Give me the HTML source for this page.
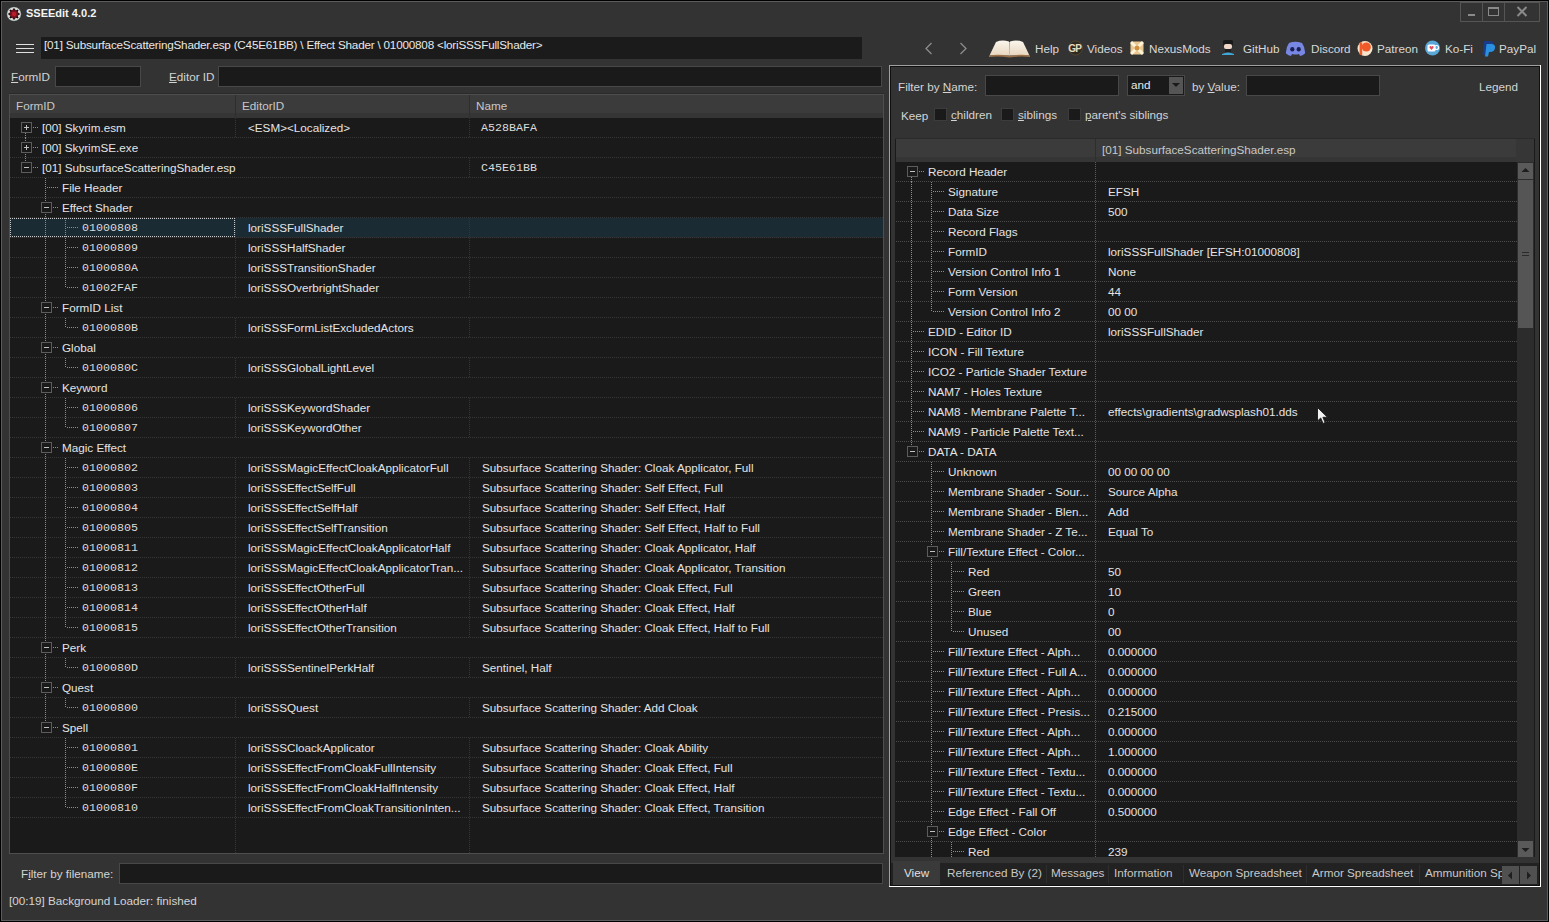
<!DOCTYPE html>
<html><head><meta charset="utf-8"><title>SSEEdit 4.0.2</title>
<style>
html,body{margin:0;padding:0;width:1549px;height:922px;overflow:hidden;background:#333}
body{position:relative;font-family:"Liberation Sans",sans-serif;font-size:11.7px;color:#e0e0e0}
div,span,svg{position:absolute}
.t{white-space:pre;height:20px}
u{text-decoration:underline;text-underline-offset:1px}
</style></head><body>
<div style="left:0px;top:0px;width:1549px;height:922px;background:#000"></div>
<div style="left:1px;top:1px;width:1547px;height:920px;background:#5c5c5c"></div>
<div style="left:2px;top:2px;width:1545px;height:918px;background:#333333"></div>
<svg style="position:absolute;left:6px;top:6px" width="16" height="16" viewBox="0 0 16 16">
<circle cx="8" cy="8" r="7.3" fill="#dcdcdc"/>
<circle cx="8" cy="8" r="7.3" fill="none" stroke="#1a2a24" stroke-width="0.6"/>
<circle cx="8" cy="8" r="4.6" fill="#7a1020"/>
<g stroke="#0a0a0a" stroke-width="1.7"><line x1="8" y1="2.4" x2="8" y2="4.2"/><line x1="8" y1="11.8" x2="8" y2="13.6"/><line x1="2.4" y1="8" x2="4.2" y2="8"/><line x1="11.8" y1="8" x2="13.6" y2="8"/>
<line x1="4" y1="4" x2="5.3" y2="5.3"/><line x1="10.7" y1="10.7" x2="12" y2="12"/><line x1="4" y1="12" x2="5.3" y2="10.7"/><line x1="10.7" y1="5.3" x2="12" y2="4"/></g>
<circle cx="8" cy="8" r="2.2" fill="#b81c2c"/>
</svg>
<span class="t" style="left:26px;top:3px;line-height:20px;font-weight:bold;font-size:11px;color:#f4f4f4">SSEEdit 4.0.2</span>
<div style="left:1460px;top:2px;width:80px;height:20px;border:1px solid #555;box-sizing:border-box"></div>
<div style="left:1482px;top:2px;width:1px;height:20px;background:#555"></div>
<div style="left:1504px;top:2px;width:1px;height:20px;background:#555"></div>
<div style="left:1468px;top:14px;width:7px;height:2px;background:#8a8a8a"></div>
<div style="left:1488px;top:7px;width:11px;height:9px;border:1px solid #8a8a8a;border-top-width:2px;box-sizing:border-box"></div>
<svg style="position:absolute;left:1516px;top:6px" width="12" height="11" viewBox="0 0 12 11"><path d="M1.5 1 L10.5 10 M10.5 1 L1.5 10" stroke="#8a8a8a" stroke-width="2"/></svg>
<div style="left:16px;top:44px;width:18px;height:1px;background:#e0e0e0"></div>
<div style="left:16px;top:48px;width:18px;height:1px;background:#e0e0e0"></div>
<div style="left:16px;top:52px;width:18px;height:1px;background:#e0e0e0"></div>
<div style="left:41px;top:37px;width:821px;height:22px;background:#1b1b1b"></div>
<span class="t" style="left:44px;top:35px;line-height:20px;color:#e8e8e8;letter-spacing:-0.2px">[01] SubsurfaceScatteringShader.esp (C45E61BB) \ Effect Shader \ 01000808 &lt;loriSSSFullShader&gt;</span>
<svg style="position:absolute;left:924px;top:42px" width="10" height="13" viewBox="0 0 10 13"><path d="M7.5 1 L2 6.5 L7.5 12" stroke="#8c8c8c" stroke-width="1.3" fill="none"/></svg>
<svg style="position:absolute;left:958px;top:42px" width="10" height="13" viewBox="0 0 10 13"><path d="M2.5 1 L8 6.5 L2.5 12" stroke="#8c8c8c" stroke-width="1.3" fill="none"/></svg>
<svg style="position:absolute;left:988px;top:39px" width="43" height="19" viewBox="0 0 43 19">
<defs><linearGradient id="pg" x1="0" y1="0" x2="0" y2="1"><stop offset="0" stop-color="#fbf6ee"/><stop offset="1" stop-color="#e8d6be"/></linearGradient></defs>
<path d="M1.5 16.5 L8 3 Q14 0.5 21 2.5 L21.5 16.5 Z" fill="url(#pg)"/>
<path d="M41.5 16.5 L35 3 Q29 0.5 22 2.5 L21.5 16.5 Z" fill="url(#pg)"/>
<path d="M1 16.5 Q11 15 21.5 17 Q32 15 42 16.5 L42 18 Q32 16.8 21.5 18.6 Q11 16.8 1 18 Z" fill="#9a7048"/>
<path d="M21.5 3 L21.5 16.5" stroke="#d8c8b0" stroke-width="0.8"/>
</svg>
<span class="t" style="left:1035px;top:39px;line-height:20px;color:#d8d8d8">Help</span>
<svg style="position:absolute;left:1067px;top:40px" width="17" height="16" viewBox="0 0 17 16"><circle cx="8.5" cy="8" r="7" fill="#2e2a22" stroke="#5a4a30" stroke-width="0.8"/><text x="1.3" y="12.3" font-family="Liberation Sans" font-size="10" font-weight="bold" fill="#e8dcc0" letter-spacing="-0.8">GP</text></svg>
<span class="t" style="left:1087px;top:39px;line-height:20px;color:#d8d8d8">Videos</span>
<svg style="position:absolute;left:1130px;top:41px" width="14" height="14" viewBox="0 0 14 14"><rect x="0.5" y="0.5" width="13" height="13" rx="3" fill="#e8c890"/><path d="M1 1 L13 13 M13 1 L1 13" stroke="#fff4d8" stroke-width="3"/><circle cx="7" cy="7" r="2.5" fill="#d09040"/></svg>
<span class="t" style="left:1149px;top:39px;line-height:20px;color:#d8d8d8">NexusMods</span>
<svg style="position:absolute;left:1221px;top:39px" width="14" height="17" viewBox="0 0 14 17"><rect x="2" y="1" width="10" height="6" rx="2" fill="#181818"/><rect x="3" y="5" width="8" height="5" rx="2" fill="#f0d8c8"/><rect x="4" y="10" width="6" height="3" fill="#202020"/><path d="M1 15 Q7 12 13 15 L13 16 L1 16Z" fill="#40a8d8"/></svg>
<span class="t" style="left:1243px;top:39px;line-height:20px;color:#d8d8d8">GitHub</span>
<svg style="position:absolute;left:1285px;top:41px" width="21" height="15" viewBox="0 0 21 15"><path d="M4 2 Q10 -0.5 17 2 Q20.5 7 20 12.5 Q17.5 14.5 15 15 L14 13 Q10.5 14 7 13 L6 15 Q3.5 14.5 1 12.5 Q0.5 7 4 2Z" fill="#7886e4"/><ellipse cx="7.3" cy="8.3" rx="2.1" ry="2.3" fill="#1a2050"/><ellipse cx="13.7" cy="8.3" rx="2.1" ry="2.3" fill="#1a2050"/></svg>
<span class="t" style="left:1311px;top:39px;line-height:20px;color:#d8d8d8">Discord</span>
<svg style="position:absolute;left:1357px;top:40px" width="16" height="17" viewBox="0 0 16 17"><circle cx="8" cy="8.5" r="7.5" fill="#f8e4cc"/><circle cx="9.3" cy="7" r="4.6" fill="#f05a28"/><rect x="2.6" y="2.4" width="2.6" height="12.5" fill="#f05a28"/></svg>
<span class="t" style="left:1377px;top:39px;line-height:20px;color:#d8d8d8">Patreon</span>
<svg style="position:absolute;left:1424px;top:40px" width="17" height="16" viewBox="0 0 17 16"><circle cx="8.5" cy="8" r="7.5" fill="#5aa8d8"/><rect x="3.5" y="4.5" width="8" height="7" rx="1.5" fill="#fff"/><circle cx="12.5" cy="7.5" r="2" fill="none" stroke="#fff" stroke-width="1.2"/><path d="M7.5 10 L5.5 7.8 Q5 6 6.5 6 Q7.3 6 7.5 7 Q7.7 6 8.5 6 Q10 6 9.5 7.8Z" fill="#e05060"/></svg>
<span class="t" style="left:1445px;top:39px;line-height:20px;color:#d8d8d8">Ko-Fi</span>
<svg style="position:absolute;left:1482px;top:40px" width="14" height="17" viewBox="0 0 14 17"><path d="M2 1 L8 1 Q12 1 11.5 5 Q11 9 6.5 9 L5 9 L4 15 L0.5 15Z" fill="#1a3a8a"/><path d="M4.5 4 L10 4 Q13.5 4.5 13 8 Q12.5 12 8 12 L7 12 L6 16.5 L3 16.5Z" fill="#2a90e0"/></svg>
<span class="t" style="left:1499px;top:39px;line-height:20px;color:#d8d8d8">PayPal</span>
<span class="t" style="left:11px;top:67px;line-height:20px;color:#d4d4d4"><u>F</u>ormID</span>
<div style="left:55px;top:66px;width:86px;height:21px;background:#1a1a1a;border:1px solid #484848;box-sizing:border-box"></div>
<span class="t" style="left:169px;top:67px;line-height:20px;color:#d4d4d4"><u>E</u>ditor ID</span>
<div style="left:218px;top:66px;width:664px;height:21px;background:#1a1a1a;border:1px solid #484848;box-sizing:border-box"></div>
<div style="left:9px;top:93px;width:875px;height:1px;background:#2a2a2a"></div>
<div style="left:9px;top:94px;width:875px;height:760px;border:1px solid #4e4e4e;box-sizing:border-box;background:#1a1a1a"></div>
<div style="left:10px;top:95px;width:873px;height:23px;background:linear-gradient(#3b3b3b 0 18px,#353535 18px)"></div>
<div style="left:235px;top:95px;width:1px;height:23px;background:#2e2e2e"></div>
<div style="left:469px;top:95px;width:1px;height:23px;background:#2e2e2e"></div>
<span class="t" style="left:16px;top:96px;line-height:20px;color:#c8c8c8">FormID</span>
<span class="t" style="left:242px;top:96px;line-height:20px;color:#c8c8c8">EditorID</span>
<span class="t" style="left:476px;top:96px;line-height:20px;color:#c8c8c8">Name</span>
<div style="left:10px;top:218px;width:873px;height:20px;background:#1b2b33"></div>
<div style="left:10px;top:137px;width:873px;height:1px;background:repeating-linear-gradient(90deg,#363636 0 1px,transparent 1px 2px)"></div>
<div style="left:10px;top:157px;width:873px;height:1px;background:repeating-linear-gradient(90deg,#363636 0 1px,transparent 1px 2px)"></div>
<div style="left:10px;top:177px;width:873px;height:1px;background:repeating-linear-gradient(90deg,#363636 0 1px,transparent 1px 2px)"></div>
<div style="left:10px;top:197px;width:873px;height:1px;background:repeating-linear-gradient(90deg,#363636 0 1px,transparent 1px 2px)"></div>
<div style="left:10px;top:217px;width:873px;height:1px;background:repeating-linear-gradient(90deg,#363636 0 1px,transparent 1px 2px)"></div>
<div style="left:10px;top:237px;width:873px;height:1px;background:repeating-linear-gradient(90deg,#363636 0 1px,transparent 1px 2px)"></div>
<div style="left:10px;top:257px;width:873px;height:1px;background:repeating-linear-gradient(90deg,#363636 0 1px,transparent 1px 2px)"></div>
<div style="left:10px;top:277px;width:873px;height:1px;background:repeating-linear-gradient(90deg,#363636 0 1px,transparent 1px 2px)"></div>
<div style="left:10px;top:297px;width:873px;height:1px;background:repeating-linear-gradient(90deg,#363636 0 1px,transparent 1px 2px)"></div>
<div style="left:10px;top:317px;width:873px;height:1px;background:repeating-linear-gradient(90deg,#363636 0 1px,transparent 1px 2px)"></div>
<div style="left:10px;top:337px;width:873px;height:1px;background:repeating-linear-gradient(90deg,#363636 0 1px,transparent 1px 2px)"></div>
<div style="left:10px;top:357px;width:873px;height:1px;background:repeating-linear-gradient(90deg,#363636 0 1px,transparent 1px 2px)"></div>
<div style="left:10px;top:377px;width:873px;height:1px;background:repeating-linear-gradient(90deg,#363636 0 1px,transparent 1px 2px)"></div>
<div style="left:10px;top:397px;width:873px;height:1px;background:repeating-linear-gradient(90deg,#363636 0 1px,transparent 1px 2px)"></div>
<div style="left:10px;top:417px;width:873px;height:1px;background:repeating-linear-gradient(90deg,#363636 0 1px,transparent 1px 2px)"></div>
<div style="left:10px;top:437px;width:873px;height:1px;background:repeating-linear-gradient(90deg,#363636 0 1px,transparent 1px 2px)"></div>
<div style="left:10px;top:457px;width:873px;height:1px;background:repeating-linear-gradient(90deg,#363636 0 1px,transparent 1px 2px)"></div>
<div style="left:10px;top:477px;width:873px;height:1px;background:repeating-linear-gradient(90deg,#363636 0 1px,transparent 1px 2px)"></div>
<div style="left:10px;top:497px;width:873px;height:1px;background:repeating-linear-gradient(90deg,#363636 0 1px,transparent 1px 2px)"></div>
<div style="left:10px;top:517px;width:873px;height:1px;background:repeating-linear-gradient(90deg,#363636 0 1px,transparent 1px 2px)"></div>
<div style="left:10px;top:537px;width:873px;height:1px;background:repeating-linear-gradient(90deg,#363636 0 1px,transparent 1px 2px)"></div>
<div style="left:10px;top:557px;width:873px;height:1px;background:repeating-linear-gradient(90deg,#363636 0 1px,transparent 1px 2px)"></div>
<div style="left:10px;top:577px;width:873px;height:1px;background:repeating-linear-gradient(90deg,#363636 0 1px,transparent 1px 2px)"></div>
<div style="left:10px;top:597px;width:873px;height:1px;background:repeating-linear-gradient(90deg,#363636 0 1px,transparent 1px 2px)"></div>
<div style="left:10px;top:617px;width:873px;height:1px;background:repeating-linear-gradient(90deg,#363636 0 1px,transparent 1px 2px)"></div>
<div style="left:10px;top:637px;width:873px;height:1px;background:repeating-linear-gradient(90deg,#363636 0 1px,transparent 1px 2px)"></div>
<div style="left:10px;top:657px;width:873px;height:1px;background:repeating-linear-gradient(90deg,#363636 0 1px,transparent 1px 2px)"></div>
<div style="left:10px;top:677px;width:873px;height:1px;background:repeating-linear-gradient(90deg,#363636 0 1px,transparent 1px 2px)"></div>
<div style="left:10px;top:697px;width:873px;height:1px;background:repeating-linear-gradient(90deg,#363636 0 1px,transparent 1px 2px)"></div>
<div style="left:10px;top:717px;width:873px;height:1px;background:repeating-linear-gradient(90deg,#363636 0 1px,transparent 1px 2px)"></div>
<div style="left:10px;top:737px;width:873px;height:1px;background:repeating-linear-gradient(90deg,#363636 0 1px,transparent 1px 2px)"></div>
<div style="left:10px;top:757px;width:873px;height:1px;background:repeating-linear-gradient(90deg,#363636 0 1px,transparent 1px 2px)"></div>
<div style="left:10px;top:777px;width:873px;height:1px;background:repeating-linear-gradient(90deg,#363636 0 1px,transparent 1px 2px)"></div>
<div style="left:10px;top:797px;width:873px;height:1px;background:repeating-linear-gradient(90deg,#363636 0 1px,transparent 1px 2px)"></div>
<div style="left:10px;top:817px;width:873px;height:1px;background:repeating-linear-gradient(90deg,#363636 0 1px,transparent 1px 2px)"></div>
<div style="left:235px;top:118px;width:1px;height:19px;background:repeating-linear-gradient(180deg,#363636 0 1px,transparent 1px 2px)"></div>
<div style="left:469px;top:118px;width:1px;height:19px;background:repeating-linear-gradient(180deg,#363636 0 1px,transparent 1px 2px)"></div>
<div style="left:469px;top:158px;width:1px;height:19px;background:repeating-linear-gradient(180deg,#363636 0 1px,transparent 1px 2px)"></div>
<div style="left:235px;top:218px;width:1px;height:19px;background:repeating-linear-gradient(180deg,#363636 0 1px,transparent 1px 2px)"></div>
<div style="left:469px;top:218px;width:1px;height:19px;background:repeating-linear-gradient(180deg,#363636 0 1px,transparent 1px 2px)"></div>
<div style="left:235px;top:238px;width:1px;height:19px;background:repeating-linear-gradient(180deg,#363636 0 1px,transparent 1px 2px)"></div>
<div style="left:469px;top:238px;width:1px;height:19px;background:repeating-linear-gradient(180deg,#363636 0 1px,transparent 1px 2px)"></div>
<div style="left:235px;top:258px;width:1px;height:19px;background:repeating-linear-gradient(180deg,#363636 0 1px,transparent 1px 2px)"></div>
<div style="left:469px;top:258px;width:1px;height:19px;background:repeating-linear-gradient(180deg,#363636 0 1px,transparent 1px 2px)"></div>
<div style="left:235px;top:278px;width:1px;height:19px;background:repeating-linear-gradient(180deg,#363636 0 1px,transparent 1px 2px)"></div>
<div style="left:469px;top:278px;width:1px;height:19px;background:repeating-linear-gradient(180deg,#363636 0 1px,transparent 1px 2px)"></div>
<div style="left:235px;top:318px;width:1px;height:19px;background:repeating-linear-gradient(180deg,#363636 0 1px,transparent 1px 2px)"></div>
<div style="left:469px;top:318px;width:1px;height:19px;background:repeating-linear-gradient(180deg,#363636 0 1px,transparent 1px 2px)"></div>
<div style="left:235px;top:358px;width:1px;height:19px;background:repeating-linear-gradient(180deg,#363636 0 1px,transparent 1px 2px)"></div>
<div style="left:469px;top:358px;width:1px;height:19px;background:repeating-linear-gradient(180deg,#363636 0 1px,transparent 1px 2px)"></div>
<div style="left:235px;top:398px;width:1px;height:19px;background:repeating-linear-gradient(180deg,#363636 0 1px,transparent 1px 2px)"></div>
<div style="left:469px;top:398px;width:1px;height:19px;background:repeating-linear-gradient(180deg,#363636 0 1px,transparent 1px 2px)"></div>
<div style="left:235px;top:418px;width:1px;height:19px;background:repeating-linear-gradient(180deg,#363636 0 1px,transparent 1px 2px)"></div>
<div style="left:469px;top:418px;width:1px;height:19px;background:repeating-linear-gradient(180deg,#363636 0 1px,transparent 1px 2px)"></div>
<div style="left:235px;top:458px;width:1px;height:19px;background:repeating-linear-gradient(180deg,#363636 0 1px,transparent 1px 2px)"></div>
<div style="left:469px;top:458px;width:1px;height:19px;background:repeating-linear-gradient(180deg,#363636 0 1px,transparent 1px 2px)"></div>
<div style="left:235px;top:478px;width:1px;height:19px;background:repeating-linear-gradient(180deg,#363636 0 1px,transparent 1px 2px)"></div>
<div style="left:469px;top:478px;width:1px;height:19px;background:repeating-linear-gradient(180deg,#363636 0 1px,transparent 1px 2px)"></div>
<div style="left:235px;top:498px;width:1px;height:19px;background:repeating-linear-gradient(180deg,#363636 0 1px,transparent 1px 2px)"></div>
<div style="left:469px;top:498px;width:1px;height:19px;background:repeating-linear-gradient(180deg,#363636 0 1px,transparent 1px 2px)"></div>
<div style="left:235px;top:518px;width:1px;height:19px;background:repeating-linear-gradient(180deg,#363636 0 1px,transparent 1px 2px)"></div>
<div style="left:469px;top:518px;width:1px;height:19px;background:repeating-linear-gradient(180deg,#363636 0 1px,transparent 1px 2px)"></div>
<div style="left:235px;top:538px;width:1px;height:19px;background:repeating-linear-gradient(180deg,#363636 0 1px,transparent 1px 2px)"></div>
<div style="left:469px;top:538px;width:1px;height:19px;background:repeating-linear-gradient(180deg,#363636 0 1px,transparent 1px 2px)"></div>
<div style="left:235px;top:558px;width:1px;height:19px;background:repeating-linear-gradient(180deg,#363636 0 1px,transparent 1px 2px)"></div>
<div style="left:469px;top:558px;width:1px;height:19px;background:repeating-linear-gradient(180deg,#363636 0 1px,transparent 1px 2px)"></div>
<div style="left:235px;top:578px;width:1px;height:19px;background:repeating-linear-gradient(180deg,#363636 0 1px,transparent 1px 2px)"></div>
<div style="left:469px;top:578px;width:1px;height:19px;background:repeating-linear-gradient(180deg,#363636 0 1px,transparent 1px 2px)"></div>
<div style="left:235px;top:598px;width:1px;height:19px;background:repeating-linear-gradient(180deg,#363636 0 1px,transparent 1px 2px)"></div>
<div style="left:469px;top:598px;width:1px;height:19px;background:repeating-linear-gradient(180deg,#363636 0 1px,transparent 1px 2px)"></div>
<div style="left:235px;top:618px;width:1px;height:19px;background:repeating-linear-gradient(180deg,#363636 0 1px,transparent 1px 2px)"></div>
<div style="left:469px;top:618px;width:1px;height:19px;background:repeating-linear-gradient(180deg,#363636 0 1px,transparent 1px 2px)"></div>
<div style="left:235px;top:658px;width:1px;height:19px;background:repeating-linear-gradient(180deg,#363636 0 1px,transparent 1px 2px)"></div>
<div style="left:469px;top:658px;width:1px;height:19px;background:repeating-linear-gradient(180deg,#363636 0 1px,transparent 1px 2px)"></div>
<div style="left:235px;top:698px;width:1px;height:19px;background:repeating-linear-gradient(180deg,#363636 0 1px,transparent 1px 2px)"></div>
<div style="left:469px;top:698px;width:1px;height:19px;background:repeating-linear-gradient(180deg,#363636 0 1px,transparent 1px 2px)"></div>
<div style="left:235px;top:738px;width:1px;height:19px;background:repeating-linear-gradient(180deg,#363636 0 1px,transparent 1px 2px)"></div>
<div style="left:469px;top:738px;width:1px;height:19px;background:repeating-linear-gradient(180deg,#363636 0 1px,transparent 1px 2px)"></div>
<div style="left:235px;top:758px;width:1px;height:19px;background:repeating-linear-gradient(180deg,#363636 0 1px,transparent 1px 2px)"></div>
<div style="left:469px;top:758px;width:1px;height:19px;background:repeating-linear-gradient(180deg,#363636 0 1px,transparent 1px 2px)"></div>
<div style="left:235px;top:778px;width:1px;height:19px;background:repeating-linear-gradient(180deg,#363636 0 1px,transparent 1px 2px)"></div>
<div style="left:469px;top:778px;width:1px;height:19px;background:repeating-linear-gradient(180deg,#363636 0 1px,transparent 1px 2px)"></div>
<div style="left:235px;top:798px;width:1px;height:19px;background:repeating-linear-gradient(180deg,#363636 0 1px,transparent 1px 2px)"></div>
<div style="left:469px;top:798px;width:1px;height:19px;background:repeating-linear-gradient(180deg,#363636 0 1px,transparent 1px 2px)"></div>
<div style="left:235px;top:818px;width:1px;height:35px;background:repeating-linear-gradient(180deg,#363636 0 1px,transparent 1px 2px)"></div>
<div style="left:469px;top:818px;width:1px;height:35px;background:repeating-linear-gradient(180deg,#363636 0 1px,transparent 1px 2px)"></div>
<div style="left:25px;top:127px;width:1px;height:11px;background:repeating-linear-gradient(180deg,#8c8c8c 0 1px,transparent 1px 2px)"></div>
<div style="left:21px;top:122px;width:11px;height:11px;border:1px solid #5c5c5c;box-sizing:border-box;background:#1a1a1a"></div>
<div style="left:24px;top:127px;width:5px;height:1px;background:#c0c0c0"></div>
<div style="left:26px;top:125px;width:1px;height:5px;background:#c0c0c0"></div>
<div style="left:33px;top:127px;width:5px;height:1px;background:repeating-linear-gradient(90deg,#8c8c8c 0 1px,transparent 1px 2px)"></div>
<div style="left:25px;top:138px;width:1px;height:20px;background:repeating-linear-gradient(180deg,#8c8c8c 0 1px,transparent 1px 2px)"></div>
<div style="left:21px;top:142px;width:11px;height:11px;border:1px solid #5c5c5c;box-sizing:border-box;background:#1a1a1a"></div>
<div style="left:24px;top:147px;width:5px;height:1px;background:#c0c0c0"></div>
<div style="left:26px;top:145px;width:1px;height:5px;background:#c0c0c0"></div>
<div style="left:33px;top:147px;width:5px;height:1px;background:repeating-linear-gradient(90deg,#8c8c8c 0 1px,transparent 1px 2px)"></div>
<div style="left:25px;top:158px;width:1px;height:10px;background:repeating-linear-gradient(180deg,#8c8c8c 0 1px,transparent 1px 2px)"></div>
<div style="left:21px;top:162px;width:11px;height:11px;border:1px solid #5c5c5c;box-sizing:border-box;background:#1a1a1a"></div>
<div style="left:24px;top:167px;width:5px;height:1px;background:#c0c0c0"></div>
<div style="left:33px;top:167px;width:5px;height:1px;background:repeating-linear-gradient(90deg,#8c8c8c 0 1px,transparent 1px 2px)"></div>
<div style="left:45px;top:178px;width:1px;height:20px;background:repeating-linear-gradient(180deg,#8c8c8c 0 1px,transparent 1px 2px)"></div>
<div style="left:47px;top:187px;width:11px;height:1px;background:repeating-linear-gradient(90deg,#8c8c8c 0 1px,transparent 1px 2px)"></div>
<div style="left:45px;top:198px;width:1px;height:20px;background:repeating-linear-gradient(180deg,#8c8c8c 0 1px,transparent 1px 2px)"></div>
<div style="left:41px;top:202px;width:11px;height:11px;border:1px solid #5c5c5c;box-sizing:border-box;background:#1a1a1a"></div>
<div style="left:44px;top:207px;width:5px;height:1px;background:#c0c0c0"></div>
<div style="left:53px;top:207px;width:5px;height:1px;background:repeating-linear-gradient(90deg,#8c8c8c 0 1px,transparent 1px 2px)"></div>
<div style="left:65px;top:218px;width:1px;height:20px;background:repeating-linear-gradient(180deg,#8c8c8c 0 1px,transparent 1px 2px)"></div>
<div style="left:45px;top:218px;width:1px;height:20px;background:repeating-linear-gradient(180deg,#8c8c8c 0 1px,transparent 1px 2px)"></div>
<div style="left:67px;top:227px;width:11px;height:1px;background:repeating-linear-gradient(90deg,#8c8c8c 0 1px,transparent 1px 2px)"></div>
<div style="left:65px;top:238px;width:1px;height:20px;background:repeating-linear-gradient(180deg,#8c8c8c 0 1px,transparent 1px 2px)"></div>
<div style="left:45px;top:238px;width:1px;height:20px;background:repeating-linear-gradient(180deg,#8c8c8c 0 1px,transparent 1px 2px)"></div>
<div style="left:67px;top:247px;width:11px;height:1px;background:repeating-linear-gradient(90deg,#8c8c8c 0 1px,transparent 1px 2px)"></div>
<div style="left:65px;top:258px;width:1px;height:20px;background:repeating-linear-gradient(180deg,#8c8c8c 0 1px,transparent 1px 2px)"></div>
<div style="left:45px;top:258px;width:1px;height:20px;background:repeating-linear-gradient(180deg,#8c8c8c 0 1px,transparent 1px 2px)"></div>
<div style="left:67px;top:267px;width:11px;height:1px;background:repeating-linear-gradient(90deg,#8c8c8c 0 1px,transparent 1px 2px)"></div>
<div style="left:65px;top:278px;width:1px;height:10px;background:repeating-linear-gradient(180deg,#8c8c8c 0 1px,transparent 1px 2px)"></div>
<div style="left:45px;top:278px;width:1px;height:20px;background:repeating-linear-gradient(180deg,#8c8c8c 0 1px,transparent 1px 2px)"></div>
<div style="left:67px;top:287px;width:11px;height:1px;background:repeating-linear-gradient(90deg,#8c8c8c 0 1px,transparent 1px 2px)"></div>
<div style="left:45px;top:298px;width:1px;height:20px;background:repeating-linear-gradient(180deg,#8c8c8c 0 1px,transparent 1px 2px)"></div>
<div style="left:41px;top:302px;width:11px;height:11px;border:1px solid #5c5c5c;box-sizing:border-box;background:#1a1a1a"></div>
<div style="left:44px;top:307px;width:5px;height:1px;background:#c0c0c0"></div>
<div style="left:53px;top:307px;width:5px;height:1px;background:repeating-linear-gradient(90deg,#8c8c8c 0 1px,transparent 1px 2px)"></div>
<div style="left:65px;top:318px;width:1px;height:10px;background:repeating-linear-gradient(180deg,#8c8c8c 0 1px,transparent 1px 2px)"></div>
<div style="left:45px;top:318px;width:1px;height:20px;background:repeating-linear-gradient(180deg,#8c8c8c 0 1px,transparent 1px 2px)"></div>
<div style="left:67px;top:327px;width:11px;height:1px;background:repeating-linear-gradient(90deg,#8c8c8c 0 1px,transparent 1px 2px)"></div>
<div style="left:45px;top:338px;width:1px;height:20px;background:repeating-linear-gradient(180deg,#8c8c8c 0 1px,transparent 1px 2px)"></div>
<div style="left:41px;top:342px;width:11px;height:11px;border:1px solid #5c5c5c;box-sizing:border-box;background:#1a1a1a"></div>
<div style="left:44px;top:347px;width:5px;height:1px;background:#c0c0c0"></div>
<div style="left:53px;top:347px;width:5px;height:1px;background:repeating-linear-gradient(90deg,#8c8c8c 0 1px,transparent 1px 2px)"></div>
<div style="left:65px;top:358px;width:1px;height:10px;background:repeating-linear-gradient(180deg,#8c8c8c 0 1px,transparent 1px 2px)"></div>
<div style="left:45px;top:358px;width:1px;height:20px;background:repeating-linear-gradient(180deg,#8c8c8c 0 1px,transparent 1px 2px)"></div>
<div style="left:67px;top:367px;width:11px;height:1px;background:repeating-linear-gradient(90deg,#8c8c8c 0 1px,transparent 1px 2px)"></div>
<div style="left:45px;top:378px;width:1px;height:20px;background:repeating-linear-gradient(180deg,#8c8c8c 0 1px,transparent 1px 2px)"></div>
<div style="left:41px;top:382px;width:11px;height:11px;border:1px solid #5c5c5c;box-sizing:border-box;background:#1a1a1a"></div>
<div style="left:44px;top:387px;width:5px;height:1px;background:#c0c0c0"></div>
<div style="left:53px;top:387px;width:5px;height:1px;background:repeating-linear-gradient(90deg,#8c8c8c 0 1px,transparent 1px 2px)"></div>
<div style="left:65px;top:398px;width:1px;height:20px;background:repeating-linear-gradient(180deg,#8c8c8c 0 1px,transparent 1px 2px)"></div>
<div style="left:45px;top:398px;width:1px;height:20px;background:repeating-linear-gradient(180deg,#8c8c8c 0 1px,transparent 1px 2px)"></div>
<div style="left:67px;top:407px;width:11px;height:1px;background:repeating-linear-gradient(90deg,#8c8c8c 0 1px,transparent 1px 2px)"></div>
<div style="left:65px;top:418px;width:1px;height:10px;background:repeating-linear-gradient(180deg,#8c8c8c 0 1px,transparent 1px 2px)"></div>
<div style="left:45px;top:418px;width:1px;height:20px;background:repeating-linear-gradient(180deg,#8c8c8c 0 1px,transparent 1px 2px)"></div>
<div style="left:67px;top:427px;width:11px;height:1px;background:repeating-linear-gradient(90deg,#8c8c8c 0 1px,transparent 1px 2px)"></div>
<div style="left:45px;top:438px;width:1px;height:20px;background:repeating-linear-gradient(180deg,#8c8c8c 0 1px,transparent 1px 2px)"></div>
<div style="left:41px;top:442px;width:11px;height:11px;border:1px solid #5c5c5c;box-sizing:border-box;background:#1a1a1a"></div>
<div style="left:44px;top:447px;width:5px;height:1px;background:#c0c0c0"></div>
<div style="left:53px;top:447px;width:5px;height:1px;background:repeating-linear-gradient(90deg,#8c8c8c 0 1px,transparent 1px 2px)"></div>
<div style="left:65px;top:458px;width:1px;height:20px;background:repeating-linear-gradient(180deg,#8c8c8c 0 1px,transparent 1px 2px)"></div>
<div style="left:45px;top:458px;width:1px;height:20px;background:repeating-linear-gradient(180deg,#8c8c8c 0 1px,transparent 1px 2px)"></div>
<div style="left:67px;top:467px;width:11px;height:1px;background:repeating-linear-gradient(90deg,#8c8c8c 0 1px,transparent 1px 2px)"></div>
<div style="left:65px;top:478px;width:1px;height:20px;background:repeating-linear-gradient(180deg,#8c8c8c 0 1px,transparent 1px 2px)"></div>
<div style="left:45px;top:478px;width:1px;height:20px;background:repeating-linear-gradient(180deg,#8c8c8c 0 1px,transparent 1px 2px)"></div>
<div style="left:67px;top:487px;width:11px;height:1px;background:repeating-linear-gradient(90deg,#8c8c8c 0 1px,transparent 1px 2px)"></div>
<div style="left:65px;top:498px;width:1px;height:20px;background:repeating-linear-gradient(180deg,#8c8c8c 0 1px,transparent 1px 2px)"></div>
<div style="left:45px;top:498px;width:1px;height:20px;background:repeating-linear-gradient(180deg,#8c8c8c 0 1px,transparent 1px 2px)"></div>
<div style="left:67px;top:507px;width:11px;height:1px;background:repeating-linear-gradient(90deg,#8c8c8c 0 1px,transparent 1px 2px)"></div>
<div style="left:65px;top:518px;width:1px;height:20px;background:repeating-linear-gradient(180deg,#8c8c8c 0 1px,transparent 1px 2px)"></div>
<div style="left:45px;top:518px;width:1px;height:20px;background:repeating-linear-gradient(180deg,#8c8c8c 0 1px,transparent 1px 2px)"></div>
<div style="left:67px;top:527px;width:11px;height:1px;background:repeating-linear-gradient(90deg,#8c8c8c 0 1px,transparent 1px 2px)"></div>
<div style="left:65px;top:538px;width:1px;height:20px;background:repeating-linear-gradient(180deg,#8c8c8c 0 1px,transparent 1px 2px)"></div>
<div style="left:45px;top:538px;width:1px;height:20px;background:repeating-linear-gradient(180deg,#8c8c8c 0 1px,transparent 1px 2px)"></div>
<div style="left:67px;top:547px;width:11px;height:1px;background:repeating-linear-gradient(90deg,#8c8c8c 0 1px,transparent 1px 2px)"></div>
<div style="left:65px;top:558px;width:1px;height:20px;background:repeating-linear-gradient(180deg,#8c8c8c 0 1px,transparent 1px 2px)"></div>
<div style="left:45px;top:558px;width:1px;height:20px;background:repeating-linear-gradient(180deg,#8c8c8c 0 1px,transparent 1px 2px)"></div>
<div style="left:67px;top:567px;width:11px;height:1px;background:repeating-linear-gradient(90deg,#8c8c8c 0 1px,transparent 1px 2px)"></div>
<div style="left:65px;top:578px;width:1px;height:20px;background:repeating-linear-gradient(180deg,#8c8c8c 0 1px,transparent 1px 2px)"></div>
<div style="left:45px;top:578px;width:1px;height:20px;background:repeating-linear-gradient(180deg,#8c8c8c 0 1px,transparent 1px 2px)"></div>
<div style="left:67px;top:587px;width:11px;height:1px;background:repeating-linear-gradient(90deg,#8c8c8c 0 1px,transparent 1px 2px)"></div>
<div style="left:65px;top:598px;width:1px;height:20px;background:repeating-linear-gradient(180deg,#8c8c8c 0 1px,transparent 1px 2px)"></div>
<div style="left:45px;top:598px;width:1px;height:20px;background:repeating-linear-gradient(180deg,#8c8c8c 0 1px,transparent 1px 2px)"></div>
<div style="left:67px;top:607px;width:11px;height:1px;background:repeating-linear-gradient(90deg,#8c8c8c 0 1px,transparent 1px 2px)"></div>
<div style="left:65px;top:618px;width:1px;height:10px;background:repeating-linear-gradient(180deg,#8c8c8c 0 1px,transparent 1px 2px)"></div>
<div style="left:45px;top:618px;width:1px;height:20px;background:repeating-linear-gradient(180deg,#8c8c8c 0 1px,transparent 1px 2px)"></div>
<div style="left:67px;top:627px;width:11px;height:1px;background:repeating-linear-gradient(90deg,#8c8c8c 0 1px,transparent 1px 2px)"></div>
<div style="left:45px;top:638px;width:1px;height:20px;background:repeating-linear-gradient(180deg,#8c8c8c 0 1px,transparent 1px 2px)"></div>
<div style="left:41px;top:642px;width:11px;height:11px;border:1px solid #5c5c5c;box-sizing:border-box;background:#1a1a1a"></div>
<div style="left:44px;top:647px;width:5px;height:1px;background:#c0c0c0"></div>
<div style="left:53px;top:647px;width:5px;height:1px;background:repeating-linear-gradient(90deg,#8c8c8c 0 1px,transparent 1px 2px)"></div>
<div style="left:65px;top:658px;width:1px;height:10px;background:repeating-linear-gradient(180deg,#8c8c8c 0 1px,transparent 1px 2px)"></div>
<div style="left:45px;top:658px;width:1px;height:20px;background:repeating-linear-gradient(180deg,#8c8c8c 0 1px,transparent 1px 2px)"></div>
<div style="left:67px;top:667px;width:11px;height:1px;background:repeating-linear-gradient(90deg,#8c8c8c 0 1px,transparent 1px 2px)"></div>
<div style="left:45px;top:678px;width:1px;height:20px;background:repeating-linear-gradient(180deg,#8c8c8c 0 1px,transparent 1px 2px)"></div>
<div style="left:41px;top:682px;width:11px;height:11px;border:1px solid #5c5c5c;box-sizing:border-box;background:#1a1a1a"></div>
<div style="left:44px;top:687px;width:5px;height:1px;background:#c0c0c0"></div>
<div style="left:53px;top:687px;width:5px;height:1px;background:repeating-linear-gradient(90deg,#8c8c8c 0 1px,transparent 1px 2px)"></div>
<div style="left:65px;top:698px;width:1px;height:10px;background:repeating-linear-gradient(180deg,#8c8c8c 0 1px,transparent 1px 2px)"></div>
<div style="left:45px;top:698px;width:1px;height:20px;background:repeating-linear-gradient(180deg,#8c8c8c 0 1px,transparent 1px 2px)"></div>
<div style="left:67px;top:707px;width:11px;height:1px;background:repeating-linear-gradient(90deg,#8c8c8c 0 1px,transparent 1px 2px)"></div>
<div style="left:45px;top:718px;width:1px;height:10px;background:repeating-linear-gradient(180deg,#8c8c8c 0 1px,transparent 1px 2px)"></div>
<div style="left:41px;top:722px;width:11px;height:11px;border:1px solid #5c5c5c;box-sizing:border-box;background:#1a1a1a"></div>
<div style="left:44px;top:727px;width:5px;height:1px;background:#c0c0c0"></div>
<div style="left:53px;top:727px;width:5px;height:1px;background:repeating-linear-gradient(90deg,#8c8c8c 0 1px,transparent 1px 2px)"></div>
<div style="left:65px;top:738px;width:1px;height:20px;background:repeating-linear-gradient(180deg,#8c8c8c 0 1px,transparent 1px 2px)"></div>
<div style="left:67px;top:747px;width:11px;height:1px;background:repeating-linear-gradient(90deg,#8c8c8c 0 1px,transparent 1px 2px)"></div>
<div style="left:65px;top:758px;width:1px;height:20px;background:repeating-linear-gradient(180deg,#8c8c8c 0 1px,transparent 1px 2px)"></div>
<div style="left:67px;top:767px;width:11px;height:1px;background:repeating-linear-gradient(90deg,#8c8c8c 0 1px,transparent 1px 2px)"></div>
<div style="left:65px;top:778px;width:1px;height:20px;background:repeating-linear-gradient(180deg,#8c8c8c 0 1px,transparent 1px 2px)"></div>
<div style="left:67px;top:787px;width:11px;height:1px;background:repeating-linear-gradient(90deg,#8c8c8c 0 1px,transparent 1px 2px)"></div>
<div style="left:65px;top:798px;width:1px;height:10px;background:repeating-linear-gradient(180deg,#8c8c8c 0 1px,transparent 1px 2px)"></div>
<div style="left:67px;top:807px;width:11px;height:1px;background:repeating-linear-gradient(90deg,#8c8c8c 0 1px,transparent 1px 2px)"></div>
<div style="left:10px;top:218px;width:225px;height:19px;background:repeating-linear-gradient(90deg,#c8c8c8 0 1px,transparent 1px 2px) top/100% 1px no-repeat,repeating-linear-gradient(90deg,#c8c8c8 0 1px,transparent 1px 2px) bottom/100% 1px no-repeat,repeating-linear-gradient(180deg,#c8c8c8 0 1px,transparent 1px 2px) left/1px 100% no-repeat,repeating-linear-gradient(180deg,#c8c8c8 0 1px,transparent 1px 2px) right/1px 100% no-repeat"></div>
<span class="t" style="left:42px;top:118px;line-height:20px;color:#e4e4e4">[00] Skyrim.esm</span>
<span class="t" style="left:248px;top:118px;line-height:20px;color:#e4e4e4">&lt;ESM&gt;&lt;Localized&gt;</span>
<span class="t" style="left:481px;top:118px;line-height:20px;font-family:'Liberation Mono',monospace;font-size:11.67px;color:#dcdcdc">A528BAFA</span>
<span class="t" style="left:42px;top:138px;line-height:20px;color:#e4e4e4">[00] SkyrimSE.exe</span>
<span class="t" style="left:42px;top:158px;line-height:20px;color:#e4e4e4">[01] SubsurfaceScatteringShader.esp</span>
<span class="t" style="left:481px;top:158px;line-height:20px;font-family:'Liberation Mono',monospace;font-size:11.67px;color:#dcdcdc">C45E61BB</span>
<span class="t" style="left:62px;top:178px;line-height:20px;color:#e4e4e4">File Header</span>
<span class="t" style="left:62px;top:198px;line-height:20px;color:#e4e4e4">Effect Shader</span>
<span class="t" style="left:82px;top:218px;line-height:20px;font-family:'Liberation Mono',monospace;font-size:11.67px;color:#dcdcdc">01000808</span>
<span class="t" style="left:248px;top:218px;line-height:20px;color:#e4e4e4">loriSSSFullShader</span>
<span class="t" style="left:82px;top:238px;line-height:20px;font-family:'Liberation Mono',monospace;font-size:11.67px;color:#dcdcdc">01000809</span>
<span class="t" style="left:248px;top:238px;line-height:20px;color:#e4e4e4">loriSSSHalfShader</span>
<span class="t" style="left:82px;top:258px;line-height:20px;font-family:'Liberation Mono',monospace;font-size:11.67px;color:#dcdcdc">0100080A</span>
<span class="t" style="left:248px;top:258px;line-height:20px;color:#e4e4e4">loriSSSTransitionShader</span>
<span class="t" style="left:82px;top:278px;line-height:20px;font-family:'Liberation Mono',monospace;font-size:11.67px;color:#dcdcdc">01002FAF</span>
<span class="t" style="left:248px;top:278px;line-height:20px;color:#e4e4e4">loriSSSOverbrightShader</span>
<span class="t" style="left:62px;top:298px;line-height:20px;color:#e4e4e4">FormID List</span>
<span class="t" style="left:82px;top:318px;line-height:20px;font-family:'Liberation Mono',monospace;font-size:11.67px;color:#dcdcdc">0100080B</span>
<span class="t" style="left:248px;top:318px;line-height:20px;color:#e4e4e4">loriSSSFormListExcludedActors</span>
<span class="t" style="left:62px;top:338px;line-height:20px;color:#e4e4e4">Global</span>
<span class="t" style="left:82px;top:358px;line-height:20px;font-family:'Liberation Mono',monospace;font-size:11.67px;color:#dcdcdc">0100080C</span>
<span class="t" style="left:248px;top:358px;line-height:20px;color:#e4e4e4">loriSSSGlobalLightLevel</span>
<span class="t" style="left:62px;top:378px;line-height:20px;color:#e4e4e4">Keyword</span>
<span class="t" style="left:82px;top:398px;line-height:20px;font-family:'Liberation Mono',monospace;font-size:11.67px;color:#dcdcdc">01000806</span>
<span class="t" style="left:248px;top:398px;line-height:20px;color:#e4e4e4">loriSSSKeywordShader</span>
<span class="t" style="left:82px;top:418px;line-height:20px;font-family:'Liberation Mono',monospace;font-size:11.67px;color:#dcdcdc">01000807</span>
<span class="t" style="left:248px;top:418px;line-height:20px;color:#e4e4e4">loriSSSKeywordOther</span>
<span class="t" style="left:62px;top:438px;line-height:20px;color:#e4e4e4">Magic Effect</span>
<span class="t" style="left:82px;top:458px;line-height:20px;font-family:'Liberation Mono',monospace;font-size:11.67px;color:#dcdcdc">01000802</span>
<span class="t" style="left:248px;top:458px;line-height:20px;color:#e4e4e4">loriSSSMagicEffectCloakApplicatorFull</span>
<span class="t" style="left:482px;top:458px;line-height:20px;color:#e4e4e4">Subsurface Scattering Shader: Cloak Applicator, Full</span>
<span class="t" style="left:82px;top:478px;line-height:20px;font-family:'Liberation Mono',monospace;font-size:11.67px;color:#dcdcdc">01000803</span>
<span class="t" style="left:248px;top:478px;line-height:20px;color:#e4e4e4">loriSSSEffectSelfFull</span>
<span class="t" style="left:482px;top:478px;line-height:20px;color:#e4e4e4">Subsurface Scattering Shader: Self Effect, Full</span>
<span class="t" style="left:82px;top:498px;line-height:20px;font-family:'Liberation Mono',monospace;font-size:11.67px;color:#dcdcdc">01000804</span>
<span class="t" style="left:248px;top:498px;line-height:20px;color:#e4e4e4">loriSSSEffectSelfHalf</span>
<span class="t" style="left:482px;top:498px;line-height:20px;color:#e4e4e4">Subsurface Scattering Shader: Self Effect, Half</span>
<span class="t" style="left:82px;top:518px;line-height:20px;font-family:'Liberation Mono',monospace;font-size:11.67px;color:#dcdcdc">01000805</span>
<span class="t" style="left:248px;top:518px;line-height:20px;color:#e4e4e4">loriSSSEffectSelfTransition</span>
<span class="t" style="left:482px;top:518px;line-height:20px;color:#e4e4e4">Subsurface Scattering Shader: Self Effect, Half to Full</span>
<span class="t" style="left:82px;top:538px;line-height:20px;font-family:'Liberation Mono',monospace;font-size:11.67px;color:#dcdcdc">01000811</span>
<span class="t" style="left:248px;top:538px;line-height:20px;color:#e4e4e4">loriSSSMagicEffectCloakApplicatorHalf</span>
<span class="t" style="left:482px;top:538px;line-height:20px;color:#e4e4e4">Subsurface Scattering Shader: Cloak Applicator, Half</span>
<span class="t" style="left:82px;top:558px;line-height:20px;font-family:'Liberation Mono',monospace;font-size:11.67px;color:#dcdcdc">01000812</span>
<span class="t" style="left:248px;top:558px;line-height:20px;color:#e4e4e4">loriSSSMagicEffectCloakApplicatorTran...</span>
<span class="t" style="left:482px;top:558px;line-height:20px;color:#e4e4e4">Subsurface Scattering Shader: Cloak Applicator, Transition</span>
<span class="t" style="left:82px;top:578px;line-height:20px;font-family:'Liberation Mono',monospace;font-size:11.67px;color:#dcdcdc">01000813</span>
<span class="t" style="left:248px;top:578px;line-height:20px;color:#e4e4e4">loriSSSEffectOtherFull</span>
<span class="t" style="left:482px;top:578px;line-height:20px;color:#e4e4e4">Subsurface Scattering Shader: Cloak Effect, Full</span>
<span class="t" style="left:82px;top:598px;line-height:20px;font-family:'Liberation Mono',monospace;font-size:11.67px;color:#dcdcdc">01000814</span>
<span class="t" style="left:248px;top:598px;line-height:20px;color:#e4e4e4">loriSSSEffectOtherHalf</span>
<span class="t" style="left:482px;top:598px;line-height:20px;color:#e4e4e4">Subsurface Scattering Shader: Cloak Effect, Half</span>
<span class="t" style="left:82px;top:618px;line-height:20px;font-family:'Liberation Mono',monospace;font-size:11.67px;color:#dcdcdc">01000815</span>
<span class="t" style="left:248px;top:618px;line-height:20px;color:#e4e4e4">loriSSSEffectOtherTransition</span>
<span class="t" style="left:482px;top:618px;line-height:20px;color:#e4e4e4">Subsurface Scattering Shader: Cloak Effect, Half to Full</span>
<span class="t" style="left:62px;top:638px;line-height:20px;color:#e4e4e4">Perk</span>
<span class="t" style="left:82px;top:658px;line-height:20px;font-family:'Liberation Mono',monospace;font-size:11.67px;color:#dcdcdc">0100080D</span>
<span class="t" style="left:248px;top:658px;line-height:20px;color:#e4e4e4">loriSSSSentinelPerkHalf</span>
<span class="t" style="left:482px;top:658px;line-height:20px;color:#e4e4e4">Sentinel, Half</span>
<span class="t" style="left:62px;top:678px;line-height:20px;color:#e4e4e4">Quest</span>
<span class="t" style="left:82px;top:698px;line-height:20px;font-family:'Liberation Mono',monospace;font-size:11.67px;color:#dcdcdc">01000800</span>
<span class="t" style="left:248px;top:698px;line-height:20px;color:#e4e4e4">loriSSSQuest</span>
<span class="t" style="left:482px;top:698px;line-height:20px;color:#e4e4e4">Subsurface Scattering Shader: Add Cloak</span>
<span class="t" style="left:62px;top:718px;line-height:20px;color:#e4e4e4">Spell</span>
<span class="t" style="left:82px;top:738px;line-height:20px;font-family:'Liberation Mono',monospace;font-size:11.67px;color:#dcdcdc">01000801</span>
<span class="t" style="left:248px;top:738px;line-height:20px;color:#e4e4e4">loriSSSCloackApplicator</span>
<span class="t" style="left:482px;top:738px;line-height:20px;color:#e4e4e4">Subsurface Scattering Shader: Cloak Ability</span>
<span class="t" style="left:82px;top:758px;line-height:20px;font-family:'Liberation Mono',monospace;font-size:11.67px;color:#dcdcdc">0100080E</span>
<span class="t" style="left:248px;top:758px;line-height:20px;color:#e4e4e4">loriSSSEffectFromCloakFullIntensity</span>
<span class="t" style="left:482px;top:758px;line-height:20px;color:#e4e4e4">Subsurface Scattering Shader: Cloak Effect, Full</span>
<span class="t" style="left:82px;top:778px;line-height:20px;font-family:'Liberation Mono',monospace;font-size:11.67px;color:#dcdcdc">0100080F</span>
<span class="t" style="left:248px;top:778px;line-height:20px;color:#e4e4e4">loriSSSEffectFromCloakHalfIntensity</span>
<span class="t" style="left:482px;top:778px;line-height:20px;color:#e4e4e4">Subsurface Scattering Shader: Cloak Effect, Half</span>
<span class="t" style="left:82px;top:798px;line-height:20px;font-family:'Liberation Mono',monospace;font-size:11.67px;color:#dcdcdc">01000810</span>
<span class="t" style="left:248px;top:798px;line-height:20px;color:#e4e4e4">loriSSSEffectFromCloakTransitionInten...</span>
<span class="t" style="left:482px;top:798px;line-height:20px;color:#e4e4e4">Subsurface Scattering Shader: Cloak Effect, Transition</span>
<span class="t" style="left:21px;top:864px;line-height:20px;color:#d4d4d4">F<u>i</u>lter by filename:</span>
<div style="left:119px;top:863px;width:764px;height:21px;background:#1a1a1a;border:1px solid #484848;box-sizing:border-box"></div>
<span class="t" style="left:9px;top:891px;line-height:20px;color:#d4d4d4">[00:19] Background Loader: finished</span>
<div style="left:889px;top:65px;width:652px;height:822px;background:#ffffff"></div>
<div style="left:889px;top:65px;width:651px;height:821px;background:#a0a0a0"></div>
<div style="left:890px;top:66px;width:650px;height:820px;background:#101010"></div>
<div style="left:891px;top:67px;width:648px;height:818px;background:#333333"></div>
<span class="t" style="left:898px;top:77px;line-height:20px;color:#d4d4d4">Filter by <u>N</u>ame:</span>
<div style="left:985px;top:75px;width:134px;height:21px;background:#1a1a1a;border:1px solid #484848;box-sizing:border-box"></div>
<div style="left:1127px;top:75px;width:58px;height:21px;background:#1a1a1a;border:1px solid #484848;box-sizing:border-box"></div>
<span class="t" style="left:1131px;top:75px;line-height:20px;color:#e8e8e8">and</span>
<div style="left:1169px;top:77px;width:14px;height:17px;background:#555555"></div>
<svg style="position:absolute;left:1171px;top:82px" width="10" height="6" viewBox="0 0 10 6"><path d="M1 1 L9 1 L5 5Z" fill="#1a1a1a"/></svg>
<span class="t" style="left:1192px;top:77px;line-height:20px;color:#d4d4d4">by <u>V</u>alue:</span>
<div style="left:1246px;top:75px;width:134px;height:21px;background:#1a1a1a;border:1px solid #484848;box-sizing:border-box"></div>
<span class="t" style="left:1479px;top:77px;line-height:20px;color:#d4d4d4">Legend</span>
<span class="t" style="left:901px;top:106px;line-height:20px;color:#d4d4d4">Keep</span>
<div style="left:934px;top:108px;width:13px;height:13px;background:#1a1a1a;border:1px solid #3c3c3c;box-sizing:border-box"></div>
<span class="t" style="left:951px;top:105px;line-height:20px;color:#d4d4d4"><u>c</u>hildren</span>
<div style="left:1001px;top:108px;width:13px;height:13px;background:#1a1a1a;border:1px solid #3c3c3c;box-sizing:border-box"></div>
<span class="t" style="left:1018px;top:105px;line-height:20px;color:#d4d4d4"><u>s</u>iblings</span>
<div style="left:1068px;top:108px;width:13px;height:13px;background:#1a1a1a;border:1px solid #3c3c3c;box-sizing:border-box"></div>
<span class="t" style="left:1085px;top:105px;line-height:20px;color:#d4d4d4"><u>p</u>arent's siblings</span>
<div style="left:895px;top:138px;width:640px;height:1px;background:#2a2a2a"></div>
<div style="left:895px;top:139px;width:640px;height:719px;background:#1a1a1a"></div>
<div style="left:896px;top:139px;width:620px;height:23px;background:linear-gradient(#3b3b3b 0 18px,#353535 18px)"></div>
<div style="left:1516px;top:139px;width:18px;height:23px;background:#363636"></div>
<div style="left:1095px;top:139px;width:1px;height:23px;background:#2e2e2e"></div>
<span class="t" style="left:1102px;top:140px;line-height:20px;color:#c8c8c8">[01] SubsurfaceScatteringShader.esp</span>
<div style="left:896px;top:162px;width:621px;height:695px;overflow:hidden">
<div style="left:0px;top:19px;width:621px;height:1px;background:repeating-linear-gradient(90deg,#4c4c4c 0 1px,transparent 1px 2px)"></div>
<div style="left:0px;top:39px;width:621px;height:1px;background:repeating-linear-gradient(90deg,#4c4c4c 0 1px,transparent 1px 2px)"></div>
<div style="left:0px;top:59px;width:621px;height:1px;background:repeating-linear-gradient(90deg,#4c4c4c 0 1px,transparent 1px 2px)"></div>
<div style="left:0px;top:79px;width:621px;height:1px;background:repeating-linear-gradient(90deg,#4c4c4c 0 1px,transparent 1px 2px)"></div>
<div style="left:0px;top:99px;width:621px;height:1px;background:repeating-linear-gradient(90deg,#4c4c4c 0 1px,transparent 1px 2px)"></div>
<div style="left:0px;top:119px;width:621px;height:1px;background:repeating-linear-gradient(90deg,#4c4c4c 0 1px,transparent 1px 2px)"></div>
<div style="left:0px;top:139px;width:621px;height:1px;background:repeating-linear-gradient(90deg,#4c4c4c 0 1px,transparent 1px 2px)"></div>
<div style="left:0px;top:159px;width:621px;height:1px;background:repeating-linear-gradient(90deg,#4c4c4c 0 1px,transparent 1px 2px)"></div>
<div style="left:0px;top:179px;width:621px;height:1px;background:repeating-linear-gradient(90deg,#4c4c4c 0 1px,transparent 1px 2px)"></div>
<div style="left:0px;top:199px;width:621px;height:1px;background:repeating-linear-gradient(90deg,#4c4c4c 0 1px,transparent 1px 2px)"></div>
<div style="left:0px;top:219px;width:621px;height:1px;background:repeating-linear-gradient(90deg,#4c4c4c 0 1px,transparent 1px 2px)"></div>
<div style="left:0px;top:239px;width:621px;height:1px;background:repeating-linear-gradient(90deg,#4c4c4c 0 1px,transparent 1px 2px)"></div>
<div style="left:0px;top:259px;width:621px;height:1px;background:repeating-linear-gradient(90deg,#4c4c4c 0 1px,transparent 1px 2px)"></div>
<div style="left:0px;top:279px;width:621px;height:1px;background:repeating-linear-gradient(90deg,#4c4c4c 0 1px,transparent 1px 2px)"></div>
<div style="left:0px;top:299px;width:621px;height:1px;background:repeating-linear-gradient(90deg,#4c4c4c 0 1px,transparent 1px 2px)"></div>
<div style="left:0px;top:319px;width:621px;height:1px;background:repeating-linear-gradient(90deg,#4c4c4c 0 1px,transparent 1px 2px)"></div>
<div style="left:0px;top:339px;width:621px;height:1px;background:repeating-linear-gradient(90deg,#4c4c4c 0 1px,transparent 1px 2px)"></div>
<div style="left:0px;top:359px;width:621px;height:1px;background:repeating-linear-gradient(90deg,#4c4c4c 0 1px,transparent 1px 2px)"></div>
<div style="left:0px;top:379px;width:621px;height:1px;background:repeating-linear-gradient(90deg,#4c4c4c 0 1px,transparent 1px 2px)"></div>
<div style="left:0px;top:399px;width:621px;height:1px;background:repeating-linear-gradient(90deg,#4c4c4c 0 1px,transparent 1px 2px)"></div>
<div style="left:0px;top:419px;width:621px;height:1px;background:repeating-linear-gradient(90deg,#4c4c4c 0 1px,transparent 1px 2px)"></div>
<div style="left:0px;top:439px;width:621px;height:1px;background:repeating-linear-gradient(90deg,#4c4c4c 0 1px,transparent 1px 2px)"></div>
<div style="left:0px;top:459px;width:621px;height:1px;background:repeating-linear-gradient(90deg,#4c4c4c 0 1px,transparent 1px 2px)"></div>
<div style="left:0px;top:479px;width:621px;height:1px;background:repeating-linear-gradient(90deg,#4c4c4c 0 1px,transparent 1px 2px)"></div>
<div style="left:0px;top:499px;width:621px;height:1px;background:repeating-linear-gradient(90deg,#4c4c4c 0 1px,transparent 1px 2px)"></div>
<div style="left:0px;top:519px;width:621px;height:1px;background:repeating-linear-gradient(90deg,#4c4c4c 0 1px,transparent 1px 2px)"></div>
<div style="left:0px;top:539px;width:621px;height:1px;background:repeating-linear-gradient(90deg,#4c4c4c 0 1px,transparent 1px 2px)"></div>
<div style="left:0px;top:559px;width:621px;height:1px;background:repeating-linear-gradient(90deg,#4c4c4c 0 1px,transparent 1px 2px)"></div>
<div style="left:0px;top:579px;width:621px;height:1px;background:repeating-linear-gradient(90deg,#4c4c4c 0 1px,transparent 1px 2px)"></div>
<div style="left:0px;top:599px;width:621px;height:1px;background:repeating-linear-gradient(90deg,#4c4c4c 0 1px,transparent 1px 2px)"></div>
<div style="left:0px;top:619px;width:621px;height:1px;background:repeating-linear-gradient(90deg,#4c4c4c 0 1px,transparent 1px 2px)"></div>
<div style="left:0px;top:639px;width:621px;height:1px;background:repeating-linear-gradient(90deg,#4c4c4c 0 1px,transparent 1px 2px)"></div>
<div style="left:0px;top:659px;width:621px;height:1px;background:repeating-linear-gradient(90deg,#4c4c4c 0 1px,transparent 1px 2px)"></div>
<div style="left:0px;top:679px;width:621px;height:1px;background:repeating-linear-gradient(90deg,#4c4c4c 0 1px,transparent 1px 2px)"></div>
<div style="left:0px;top:699px;width:621px;height:1px;background:repeating-linear-gradient(90deg,#4c4c4c 0 1px,transparent 1px 2px)"></div>
<div style="left:0px;top:719px;width:621px;height:1px;background:repeating-linear-gradient(90deg,#4c4c4c 0 1px,transparent 1px 2px)"></div>
<div style="left:199px;top:0px;width:1px;height:20px;background:repeating-linear-gradient(180deg,#5c5c5c 0 1px,transparent 1px 2px)"></div>
<div style="left:199px;top:20px;width:1px;height:20px;background:repeating-linear-gradient(180deg,#5c5c5c 0 1px,transparent 1px 2px)"></div>
<div style="left:199px;top:40px;width:1px;height:20px;background:repeating-linear-gradient(180deg,#5c5c5c 0 1px,transparent 1px 2px)"></div>
<div style="left:199px;top:60px;width:1px;height:20px;background:repeating-linear-gradient(180deg,#5c5c5c 0 1px,transparent 1px 2px)"></div>
<div style="left:199px;top:80px;width:1px;height:20px;background:repeating-linear-gradient(180deg,#5c5c5c 0 1px,transparent 1px 2px)"></div>
<div style="left:199px;top:100px;width:1px;height:20px;background:repeating-linear-gradient(180deg,#5c5c5c 0 1px,transparent 1px 2px)"></div>
<div style="left:199px;top:120px;width:1px;height:20px;background:repeating-linear-gradient(180deg,#5c5c5c 0 1px,transparent 1px 2px)"></div>
<div style="left:199px;top:140px;width:1px;height:20px;background:repeating-linear-gradient(180deg,#5c5c5c 0 1px,transparent 1px 2px)"></div>
<div style="left:199px;top:160px;width:1px;height:20px;background:repeating-linear-gradient(180deg,#5c5c5c 0 1px,transparent 1px 2px)"></div>
<div style="left:199px;top:180px;width:1px;height:20px;background:repeating-linear-gradient(180deg,#5c5c5c 0 1px,transparent 1px 2px)"></div>
<div style="left:199px;top:200px;width:1px;height:20px;background:repeating-linear-gradient(180deg,#5c5c5c 0 1px,transparent 1px 2px)"></div>
<div style="left:199px;top:220px;width:1px;height:20px;background:repeating-linear-gradient(180deg,#5c5c5c 0 1px,transparent 1px 2px)"></div>
<div style="left:199px;top:240px;width:1px;height:20px;background:repeating-linear-gradient(180deg,#5c5c5c 0 1px,transparent 1px 2px)"></div>
<div style="left:199px;top:260px;width:1px;height:20px;background:repeating-linear-gradient(180deg,#5c5c5c 0 1px,transparent 1px 2px)"></div>
<div style="left:199px;top:280px;width:1px;height:20px;background:repeating-linear-gradient(180deg,#5c5c5c 0 1px,transparent 1px 2px)"></div>
<div style="left:199px;top:300px;width:1px;height:20px;background:repeating-linear-gradient(180deg,#5c5c5c 0 1px,transparent 1px 2px)"></div>
<div style="left:199px;top:320px;width:1px;height:20px;background:repeating-linear-gradient(180deg,#5c5c5c 0 1px,transparent 1px 2px)"></div>
<div style="left:199px;top:340px;width:1px;height:20px;background:repeating-linear-gradient(180deg,#5c5c5c 0 1px,transparent 1px 2px)"></div>
<div style="left:199px;top:360px;width:1px;height:20px;background:repeating-linear-gradient(180deg,#5c5c5c 0 1px,transparent 1px 2px)"></div>
<div style="left:199px;top:380px;width:1px;height:20px;background:repeating-linear-gradient(180deg,#5c5c5c 0 1px,transparent 1px 2px)"></div>
<div style="left:199px;top:400px;width:1px;height:20px;background:repeating-linear-gradient(180deg,#5c5c5c 0 1px,transparent 1px 2px)"></div>
<div style="left:199px;top:420px;width:1px;height:20px;background:repeating-linear-gradient(180deg,#5c5c5c 0 1px,transparent 1px 2px)"></div>
<div style="left:199px;top:440px;width:1px;height:20px;background:repeating-linear-gradient(180deg,#5c5c5c 0 1px,transparent 1px 2px)"></div>
<div style="left:199px;top:460px;width:1px;height:20px;background:repeating-linear-gradient(180deg,#5c5c5c 0 1px,transparent 1px 2px)"></div>
<div style="left:199px;top:480px;width:1px;height:20px;background:repeating-linear-gradient(180deg,#5c5c5c 0 1px,transparent 1px 2px)"></div>
<div style="left:199px;top:500px;width:1px;height:20px;background:repeating-linear-gradient(180deg,#5c5c5c 0 1px,transparent 1px 2px)"></div>
<div style="left:199px;top:520px;width:1px;height:20px;background:repeating-linear-gradient(180deg,#5c5c5c 0 1px,transparent 1px 2px)"></div>
<div style="left:199px;top:540px;width:1px;height:20px;background:repeating-linear-gradient(180deg,#5c5c5c 0 1px,transparent 1px 2px)"></div>
<div style="left:199px;top:560px;width:1px;height:20px;background:repeating-linear-gradient(180deg,#5c5c5c 0 1px,transparent 1px 2px)"></div>
<div style="left:199px;top:580px;width:1px;height:20px;background:repeating-linear-gradient(180deg,#5c5c5c 0 1px,transparent 1px 2px)"></div>
<div style="left:199px;top:600px;width:1px;height:20px;background:repeating-linear-gradient(180deg,#5c5c5c 0 1px,transparent 1px 2px)"></div>
<div style="left:199px;top:620px;width:1px;height:20px;background:repeating-linear-gradient(180deg,#5c5c5c 0 1px,transparent 1px 2px)"></div>
<div style="left:199px;top:640px;width:1px;height:20px;background:repeating-linear-gradient(180deg,#5c5c5c 0 1px,transparent 1px 2px)"></div>
<div style="left:199px;top:660px;width:1px;height:20px;background:repeating-linear-gradient(180deg,#5c5c5c 0 1px,transparent 1px 2px)"></div>
<div style="left:199px;top:680px;width:1px;height:20px;background:repeating-linear-gradient(180deg,#5c5c5c 0 1px,transparent 1px 2px)"></div>
<div style="left:199px;top:700px;width:1px;height:20px;background:repeating-linear-gradient(180deg,#5c5c5c 0 1px,transparent 1px 2px)"></div>
<div style="left:15px;top:9px;width:1px;height:11px;background:repeating-linear-gradient(180deg,#8c8c8c 0 1px,transparent 1px 2px)"></div>
<div style="left:11px;top:4px;width:11px;height:11px;border:1px solid #5c5c5c;box-sizing:border-box;background:#1a1a1a"></div>
<div style="left:14px;top:9px;width:5px;height:1px;background:#c0c0c0"></div>
<div style="left:23px;top:9px;width:5px;height:1px;background:repeating-linear-gradient(90deg,#8c8c8c 0 1px,transparent 1px 2px)"></div>
<div style="left:35px;top:20px;width:1px;height:20px;background:repeating-linear-gradient(180deg,#8c8c8c 0 1px,transparent 1px 2px)"></div>
<div style="left:15px;top:20px;width:1px;height:20px;background:repeating-linear-gradient(180deg,#8c8c8c 0 1px,transparent 1px 2px)"></div>
<div style="left:37px;top:29px;width:11px;height:1px;background:repeating-linear-gradient(90deg,#8c8c8c 0 1px,transparent 1px 2px)"></div>
<div style="left:35px;top:40px;width:1px;height:20px;background:repeating-linear-gradient(180deg,#8c8c8c 0 1px,transparent 1px 2px)"></div>
<div style="left:15px;top:40px;width:1px;height:20px;background:repeating-linear-gradient(180deg,#8c8c8c 0 1px,transparent 1px 2px)"></div>
<div style="left:37px;top:49px;width:11px;height:1px;background:repeating-linear-gradient(90deg,#8c8c8c 0 1px,transparent 1px 2px)"></div>
<div style="left:35px;top:60px;width:1px;height:20px;background:repeating-linear-gradient(180deg,#8c8c8c 0 1px,transparent 1px 2px)"></div>
<div style="left:15px;top:60px;width:1px;height:20px;background:repeating-linear-gradient(180deg,#8c8c8c 0 1px,transparent 1px 2px)"></div>
<div style="left:37px;top:69px;width:11px;height:1px;background:repeating-linear-gradient(90deg,#8c8c8c 0 1px,transparent 1px 2px)"></div>
<div style="left:35px;top:80px;width:1px;height:20px;background:repeating-linear-gradient(180deg,#8c8c8c 0 1px,transparent 1px 2px)"></div>
<div style="left:15px;top:80px;width:1px;height:20px;background:repeating-linear-gradient(180deg,#8c8c8c 0 1px,transparent 1px 2px)"></div>
<div style="left:37px;top:89px;width:11px;height:1px;background:repeating-linear-gradient(90deg,#8c8c8c 0 1px,transparent 1px 2px)"></div>
<div style="left:35px;top:100px;width:1px;height:20px;background:repeating-linear-gradient(180deg,#8c8c8c 0 1px,transparent 1px 2px)"></div>
<div style="left:15px;top:100px;width:1px;height:20px;background:repeating-linear-gradient(180deg,#8c8c8c 0 1px,transparent 1px 2px)"></div>
<div style="left:37px;top:109px;width:11px;height:1px;background:repeating-linear-gradient(90deg,#8c8c8c 0 1px,transparent 1px 2px)"></div>
<div style="left:35px;top:120px;width:1px;height:20px;background:repeating-linear-gradient(180deg,#8c8c8c 0 1px,transparent 1px 2px)"></div>
<div style="left:15px;top:120px;width:1px;height:20px;background:repeating-linear-gradient(180deg,#8c8c8c 0 1px,transparent 1px 2px)"></div>
<div style="left:37px;top:129px;width:11px;height:1px;background:repeating-linear-gradient(90deg,#8c8c8c 0 1px,transparent 1px 2px)"></div>
<div style="left:35px;top:140px;width:1px;height:10px;background:repeating-linear-gradient(180deg,#8c8c8c 0 1px,transparent 1px 2px)"></div>
<div style="left:15px;top:140px;width:1px;height:20px;background:repeating-linear-gradient(180deg,#8c8c8c 0 1px,transparent 1px 2px)"></div>
<div style="left:37px;top:149px;width:11px;height:1px;background:repeating-linear-gradient(90deg,#8c8c8c 0 1px,transparent 1px 2px)"></div>
<div style="left:15px;top:160px;width:1px;height:20px;background:repeating-linear-gradient(180deg,#8c8c8c 0 1px,transparent 1px 2px)"></div>
<div style="left:17px;top:169px;width:11px;height:1px;background:repeating-linear-gradient(90deg,#8c8c8c 0 1px,transparent 1px 2px)"></div>
<div style="left:15px;top:180px;width:1px;height:20px;background:repeating-linear-gradient(180deg,#8c8c8c 0 1px,transparent 1px 2px)"></div>
<div style="left:17px;top:189px;width:11px;height:1px;background:repeating-linear-gradient(90deg,#8c8c8c 0 1px,transparent 1px 2px)"></div>
<div style="left:15px;top:200px;width:1px;height:20px;background:repeating-linear-gradient(180deg,#8c8c8c 0 1px,transparent 1px 2px)"></div>
<div style="left:17px;top:209px;width:11px;height:1px;background:repeating-linear-gradient(90deg,#8c8c8c 0 1px,transparent 1px 2px)"></div>
<div style="left:15px;top:220px;width:1px;height:20px;background:repeating-linear-gradient(180deg,#8c8c8c 0 1px,transparent 1px 2px)"></div>
<div style="left:17px;top:229px;width:11px;height:1px;background:repeating-linear-gradient(90deg,#8c8c8c 0 1px,transparent 1px 2px)"></div>
<div style="left:15px;top:240px;width:1px;height:20px;background:repeating-linear-gradient(180deg,#8c8c8c 0 1px,transparent 1px 2px)"></div>
<div style="left:17px;top:249px;width:11px;height:1px;background:repeating-linear-gradient(90deg,#8c8c8c 0 1px,transparent 1px 2px)"></div>
<div style="left:15px;top:260px;width:1px;height:20px;background:repeating-linear-gradient(180deg,#8c8c8c 0 1px,transparent 1px 2px)"></div>
<div style="left:17px;top:269px;width:11px;height:1px;background:repeating-linear-gradient(90deg,#8c8c8c 0 1px,transparent 1px 2px)"></div>
<div style="left:15px;top:280px;width:1px;height:10px;background:repeating-linear-gradient(180deg,#8c8c8c 0 1px,transparent 1px 2px)"></div>
<div style="left:11px;top:284px;width:11px;height:11px;border:1px solid #5c5c5c;box-sizing:border-box;background:#1a1a1a"></div>
<div style="left:14px;top:289px;width:5px;height:1px;background:#c0c0c0"></div>
<div style="left:23px;top:289px;width:5px;height:1px;background:repeating-linear-gradient(90deg,#8c8c8c 0 1px,transparent 1px 2px)"></div>
<div style="left:35px;top:300px;width:1px;height:20px;background:repeating-linear-gradient(180deg,#8c8c8c 0 1px,transparent 1px 2px)"></div>
<div style="left:37px;top:309px;width:11px;height:1px;background:repeating-linear-gradient(90deg,#8c8c8c 0 1px,transparent 1px 2px)"></div>
<div style="left:35px;top:320px;width:1px;height:20px;background:repeating-linear-gradient(180deg,#8c8c8c 0 1px,transparent 1px 2px)"></div>
<div style="left:37px;top:329px;width:11px;height:1px;background:repeating-linear-gradient(90deg,#8c8c8c 0 1px,transparent 1px 2px)"></div>
<div style="left:35px;top:340px;width:1px;height:20px;background:repeating-linear-gradient(180deg,#8c8c8c 0 1px,transparent 1px 2px)"></div>
<div style="left:37px;top:349px;width:11px;height:1px;background:repeating-linear-gradient(90deg,#8c8c8c 0 1px,transparent 1px 2px)"></div>
<div style="left:35px;top:360px;width:1px;height:20px;background:repeating-linear-gradient(180deg,#8c8c8c 0 1px,transparent 1px 2px)"></div>
<div style="left:37px;top:369px;width:11px;height:1px;background:repeating-linear-gradient(90deg,#8c8c8c 0 1px,transparent 1px 2px)"></div>
<div style="left:35px;top:380px;width:1px;height:20px;background:repeating-linear-gradient(180deg,#8c8c8c 0 1px,transparent 1px 2px)"></div>
<div style="left:31px;top:384px;width:11px;height:11px;border:1px solid #5c5c5c;box-sizing:border-box;background:#1a1a1a"></div>
<div style="left:34px;top:389px;width:5px;height:1px;background:#c0c0c0"></div>
<div style="left:43px;top:389px;width:5px;height:1px;background:repeating-linear-gradient(90deg,#8c8c8c 0 1px,transparent 1px 2px)"></div>
<div style="left:55px;top:400px;width:1px;height:20px;background:repeating-linear-gradient(180deg,#8c8c8c 0 1px,transparent 1px 2px)"></div>
<div style="left:35px;top:400px;width:1px;height:20px;background:repeating-linear-gradient(180deg,#8c8c8c 0 1px,transparent 1px 2px)"></div>
<div style="left:57px;top:409px;width:11px;height:1px;background:repeating-linear-gradient(90deg,#8c8c8c 0 1px,transparent 1px 2px)"></div>
<div style="left:55px;top:420px;width:1px;height:20px;background:repeating-linear-gradient(180deg,#8c8c8c 0 1px,transparent 1px 2px)"></div>
<div style="left:35px;top:420px;width:1px;height:20px;background:repeating-linear-gradient(180deg,#8c8c8c 0 1px,transparent 1px 2px)"></div>
<div style="left:57px;top:429px;width:11px;height:1px;background:repeating-linear-gradient(90deg,#8c8c8c 0 1px,transparent 1px 2px)"></div>
<div style="left:55px;top:440px;width:1px;height:20px;background:repeating-linear-gradient(180deg,#8c8c8c 0 1px,transparent 1px 2px)"></div>
<div style="left:35px;top:440px;width:1px;height:20px;background:repeating-linear-gradient(180deg,#8c8c8c 0 1px,transparent 1px 2px)"></div>
<div style="left:57px;top:449px;width:11px;height:1px;background:repeating-linear-gradient(90deg,#8c8c8c 0 1px,transparent 1px 2px)"></div>
<div style="left:55px;top:460px;width:1px;height:10px;background:repeating-linear-gradient(180deg,#8c8c8c 0 1px,transparent 1px 2px)"></div>
<div style="left:35px;top:460px;width:1px;height:20px;background:repeating-linear-gradient(180deg,#8c8c8c 0 1px,transparent 1px 2px)"></div>
<div style="left:57px;top:469px;width:11px;height:1px;background:repeating-linear-gradient(90deg,#8c8c8c 0 1px,transparent 1px 2px)"></div>
<div style="left:35px;top:480px;width:1px;height:20px;background:repeating-linear-gradient(180deg,#8c8c8c 0 1px,transparent 1px 2px)"></div>
<div style="left:37px;top:489px;width:11px;height:1px;background:repeating-linear-gradient(90deg,#8c8c8c 0 1px,transparent 1px 2px)"></div>
<div style="left:35px;top:500px;width:1px;height:20px;background:repeating-linear-gradient(180deg,#8c8c8c 0 1px,transparent 1px 2px)"></div>
<div style="left:37px;top:509px;width:11px;height:1px;background:repeating-linear-gradient(90deg,#8c8c8c 0 1px,transparent 1px 2px)"></div>
<div style="left:35px;top:520px;width:1px;height:20px;background:repeating-linear-gradient(180deg,#8c8c8c 0 1px,transparent 1px 2px)"></div>
<div style="left:37px;top:529px;width:11px;height:1px;background:repeating-linear-gradient(90deg,#8c8c8c 0 1px,transparent 1px 2px)"></div>
<div style="left:35px;top:540px;width:1px;height:20px;background:repeating-linear-gradient(180deg,#8c8c8c 0 1px,transparent 1px 2px)"></div>
<div style="left:37px;top:549px;width:11px;height:1px;background:repeating-linear-gradient(90deg,#8c8c8c 0 1px,transparent 1px 2px)"></div>
<div style="left:35px;top:560px;width:1px;height:20px;background:repeating-linear-gradient(180deg,#8c8c8c 0 1px,transparent 1px 2px)"></div>
<div style="left:37px;top:569px;width:11px;height:1px;background:repeating-linear-gradient(90deg,#8c8c8c 0 1px,transparent 1px 2px)"></div>
<div style="left:35px;top:580px;width:1px;height:20px;background:repeating-linear-gradient(180deg,#8c8c8c 0 1px,transparent 1px 2px)"></div>
<div style="left:37px;top:589px;width:11px;height:1px;background:repeating-linear-gradient(90deg,#8c8c8c 0 1px,transparent 1px 2px)"></div>
<div style="left:35px;top:600px;width:1px;height:20px;background:repeating-linear-gradient(180deg,#8c8c8c 0 1px,transparent 1px 2px)"></div>
<div style="left:37px;top:609px;width:11px;height:1px;background:repeating-linear-gradient(90deg,#8c8c8c 0 1px,transparent 1px 2px)"></div>
<div style="left:35px;top:620px;width:1px;height:20px;background:repeating-linear-gradient(180deg,#8c8c8c 0 1px,transparent 1px 2px)"></div>
<div style="left:37px;top:629px;width:11px;height:1px;background:repeating-linear-gradient(90deg,#8c8c8c 0 1px,transparent 1px 2px)"></div>
<div style="left:35px;top:640px;width:1px;height:20px;background:repeating-linear-gradient(180deg,#8c8c8c 0 1px,transparent 1px 2px)"></div>
<div style="left:37px;top:649px;width:11px;height:1px;background:repeating-linear-gradient(90deg,#8c8c8c 0 1px,transparent 1px 2px)"></div>
<div style="left:35px;top:660px;width:1px;height:20px;background:repeating-linear-gradient(180deg,#8c8c8c 0 1px,transparent 1px 2px)"></div>
<div style="left:31px;top:664px;width:11px;height:11px;border:1px solid #5c5c5c;box-sizing:border-box;background:#1a1a1a"></div>
<div style="left:34px;top:669px;width:5px;height:1px;background:#c0c0c0"></div>
<div style="left:43px;top:669px;width:5px;height:1px;background:repeating-linear-gradient(90deg,#8c8c8c 0 1px,transparent 1px 2px)"></div>
<div style="left:55px;top:680px;width:1px;height:20px;background:repeating-linear-gradient(180deg,#8c8c8c 0 1px,transparent 1px 2px)"></div>
<div style="left:35px;top:680px;width:1px;height:20px;background:repeating-linear-gradient(180deg,#8c8c8c 0 1px,transparent 1px 2px)"></div>
<div style="left:57px;top:689px;width:11px;height:1px;background:repeating-linear-gradient(90deg,#8c8c8c 0 1px,transparent 1px 2px)"></div>
<div style="left:55px;top:700px;width:1px;height:20px;background:repeating-linear-gradient(180deg,#8c8c8c 0 1px,transparent 1px 2px)"></div>
<div style="left:35px;top:700px;width:1px;height:20px;background:repeating-linear-gradient(180deg,#8c8c8c 0 1px,transparent 1px 2px)"></div>
<div style="left:57px;top:709px;width:11px;height:1px;background:repeating-linear-gradient(90deg,#8c8c8c 0 1px,transparent 1px 2px)"></div>
<span class="t" style="left:32px;top:0px;line-height:20px;color:#e4e4e4">Record Header</span>
<span class="t" style="left:52px;top:20px;line-height:20px;color:#e4e4e4">Signature</span>
<span class="t" style="left:212px;top:20px;line-height:20px;color:#e4e4e4">EFSH</span>
<span class="t" style="left:52px;top:40px;line-height:20px;color:#e4e4e4">Data Size</span>
<span class="t" style="left:212px;top:40px;line-height:20px;color:#e4e4e4">500</span>
<span class="t" style="left:52px;top:60px;line-height:20px;color:#e4e4e4">Record Flags</span>
<span class="t" style="left:52px;top:80px;line-height:20px;color:#e4e4e4">FormID</span>
<span class="t" style="left:212px;top:80px;line-height:20px;color:#e4e4e4">loriSSSFullShader [EFSH:01000808]</span>
<span class="t" style="left:52px;top:100px;line-height:20px;color:#e4e4e4">Version Control Info 1</span>
<span class="t" style="left:212px;top:100px;line-height:20px;color:#e4e4e4">None</span>
<span class="t" style="left:52px;top:120px;line-height:20px;color:#e4e4e4">Form Version</span>
<span class="t" style="left:212px;top:120px;line-height:20px;color:#e4e4e4">44</span>
<span class="t" style="left:52px;top:140px;line-height:20px;color:#e4e4e4">Version Control Info 2</span>
<span class="t" style="left:212px;top:140px;line-height:20px;color:#e4e4e4">00 00</span>
<span class="t" style="left:32px;top:160px;line-height:20px;color:#e4e4e4">EDID - Editor ID</span>
<span class="t" style="left:212px;top:160px;line-height:20px;color:#e4e4e4">loriSSSFullShader</span>
<span class="t" style="left:32px;top:180px;line-height:20px;color:#e4e4e4">ICON - Fill Texture</span>
<span class="t" style="left:32px;top:200px;line-height:20px;color:#e4e4e4">ICO2 - Particle Shader Texture</span>
<span class="t" style="left:32px;top:220px;line-height:20px;color:#e4e4e4">NAM7 - Holes Texture</span>
<span class="t" style="left:32px;top:240px;line-height:20px;color:#e4e4e4">NAM8 - Membrane Palette T...</span>
<span class="t" style="left:212px;top:240px;line-height:20px;color:#e4e4e4">effects\gradients\gradwsplash01.dds</span>
<span class="t" style="left:32px;top:260px;line-height:20px;color:#e4e4e4">NAM9 - Particle Palette Text...</span>
<span class="t" style="left:32px;top:280px;line-height:20px;color:#e4e4e4">DATA - DATA</span>
<span class="t" style="left:52px;top:300px;line-height:20px;color:#e4e4e4">Unknown</span>
<span class="t" style="left:212px;top:300px;line-height:20px;color:#e4e4e4">00 00 00 00</span>
<span class="t" style="left:52px;top:320px;line-height:20px;color:#e4e4e4">Membrane Shader - Sour...</span>
<span class="t" style="left:212px;top:320px;line-height:20px;color:#e4e4e4">Source Alpha</span>
<span class="t" style="left:52px;top:340px;line-height:20px;color:#e4e4e4">Membrane Shader - Blen...</span>
<span class="t" style="left:212px;top:340px;line-height:20px;color:#e4e4e4">Add</span>
<span class="t" style="left:52px;top:360px;line-height:20px;color:#e4e4e4">Membrane Shader - Z Te...</span>
<span class="t" style="left:212px;top:360px;line-height:20px;color:#e4e4e4">Equal To</span>
<span class="t" style="left:52px;top:380px;line-height:20px;color:#e4e4e4">Fill/Texture Effect - Color...</span>
<span class="t" style="left:72px;top:400px;line-height:20px;color:#e4e4e4">Red</span>
<span class="t" style="left:212px;top:400px;line-height:20px;color:#e4e4e4">50</span>
<span class="t" style="left:72px;top:420px;line-height:20px;color:#e4e4e4">Green</span>
<span class="t" style="left:212px;top:420px;line-height:20px;color:#e4e4e4">10</span>
<span class="t" style="left:72px;top:440px;line-height:20px;color:#e4e4e4">Blue</span>
<span class="t" style="left:212px;top:440px;line-height:20px;color:#e4e4e4">0</span>
<span class="t" style="left:72px;top:460px;line-height:20px;color:#e4e4e4">Unused</span>
<span class="t" style="left:212px;top:460px;line-height:20px;color:#e4e4e4">00</span>
<span class="t" style="left:52px;top:480px;line-height:20px;color:#e4e4e4">Fill/Texture Effect - Alph...</span>
<span class="t" style="left:212px;top:480px;line-height:20px;color:#e4e4e4">0.000000</span>
<span class="t" style="left:52px;top:500px;line-height:20px;color:#e4e4e4">Fill/Texture Effect - Full A...</span>
<span class="t" style="left:212px;top:500px;line-height:20px;color:#e4e4e4">0.000000</span>
<span class="t" style="left:52px;top:520px;line-height:20px;color:#e4e4e4">Fill/Texture Effect - Alph...</span>
<span class="t" style="left:212px;top:520px;line-height:20px;color:#e4e4e4">0.000000</span>
<span class="t" style="left:52px;top:540px;line-height:20px;color:#e4e4e4">Fill/Texture Effect - Presis...</span>
<span class="t" style="left:212px;top:540px;line-height:20px;color:#e4e4e4">0.215000</span>
<span class="t" style="left:52px;top:560px;line-height:20px;color:#e4e4e4">Fill/Texture Effect - Alph...</span>
<span class="t" style="left:212px;top:560px;line-height:20px;color:#e4e4e4">0.000000</span>
<span class="t" style="left:52px;top:580px;line-height:20px;color:#e4e4e4">Fill/Texture Effect - Alph...</span>
<span class="t" style="left:212px;top:580px;line-height:20px;color:#e4e4e4">1.000000</span>
<span class="t" style="left:52px;top:600px;line-height:20px;color:#e4e4e4">Fill/Texture Effect - Textu...</span>
<span class="t" style="left:212px;top:600px;line-height:20px;color:#e4e4e4">0.000000</span>
<span class="t" style="left:52px;top:620px;line-height:20px;color:#e4e4e4">Fill/Texture Effect - Textu...</span>
<span class="t" style="left:212px;top:620px;line-height:20px;color:#e4e4e4">0.000000</span>
<span class="t" style="left:52px;top:640px;line-height:20px;color:#e4e4e4">Edge Effect - Fall Off</span>
<span class="t" style="left:212px;top:640px;line-height:20px;color:#e4e4e4">0.500000</span>
<span class="t" style="left:52px;top:660px;line-height:20px;color:#e4e4e4">Edge Effect - Color</span>
<span class="t" style="left:72px;top:680px;line-height:20px;color:#e4e4e4">Red</span>
<span class="t" style="left:212px;top:680px;line-height:20px;color:#e4e4e4">239</span>
<span class="t" style="left:72px;top:700px;line-height:20px;color:#e4e4e4">Green</span>
<span class="t" style="left:212px;top:700px;line-height:20px;color:#e4e4e4">0</span>
</div>
<div style="left:1517px;top:162px;width:17px;height:695px;background:#2c2c2c"></div>
<div style="left:1518px;top:163px;width:15px;height:16px;background:#5a5a5a"></div>
<svg style="position:absolute;left:1521px;top:167px" width="9" height="6" viewBox="0 0 9 6"><path d="M0.5 5 L8.5 5 L4.5 1Z" fill="#1e1e1e"/></svg>
<div style="left:1518px;top:180px;width:15px;height:148px;background:#555555"></div>
<div style="left:1522px;top:252px;width:7px;height:1px;background:#2a2a2a"></div>
<div style="left:1522px;top:255px;width:7px;height:1px;background:#2a2a2a"></div>
<div style="left:1518px;top:841px;width:15px;height:16px;background:#5a5a5a"></div>
<svg style="position:absolute;left:1521px;top:847px" width="9" height="6" viewBox="0 0 9 6"><path d="M0.5 1 L8.5 1 L4.5 5Z" fill="#1e1e1e"/></svg>
<div style="left:891px;top:857px;width:648px;height:6px;background:#333333"></div>
<div style="left:891px;top:863px;width:648px;height:22px;background:#222222"></div>
<div style="left:893px;top:861px;width:47px;height:24px;background:#3a3a3a"></div>
<span class="t" style="left:904px;top:863px;line-height:20px;color:#e0e0e0">View</span>
<div style="left:891px;top:863px;width:611px;height:22px;overflow:hidden">
<span class="t" style="left:56px;top:0px;line-height:20px;color:#c8c8c8">Referenced By (2)</span>
<span class="t" style="left:160px;top:0px;line-height:20px;color:#c8c8c8">Messages</span>
<span class="t" style="left:223px;top:0px;line-height:20px;color:#c8c8c8">Information</span>
<span class="t" style="left:298px;top:0px;line-height:20px;color:#c8c8c8">Weapon Spreadsheet</span>
<span class="t" style="left:421px;top:0px;line-height:20px;color:#c8c8c8">Armor Spreadsheet</span>
<span class="t" style="left:534px;top:0px;line-height:20px;color:#c8c8c8">Ammunition Spreadsheet</span>
</div>
<div style="left:1046px;top:865px;width:1px;height:18px;background:#2e2e2e"></div>
<div style="left:1108px;top:865px;width:1px;height:18px;background:#2e2e2e"></div>
<div style="left:1183px;top:865px;width:1px;height:18px;background:#2e2e2e"></div>
<div style="left:1306px;top:865px;width:1px;height:18px;background:#2e2e2e"></div>
<div style="left:1419px;top:865px;width:1px;height:18px;background:#2e2e2e"></div>
<div style="left:1502px;top:866px;width:17px;height:18px;background:#505050"></div>
<div style="left:1520px;top:866px;width:17px;height:18px;background:#505050"></div>
<svg style="position:absolute;left:1507px;top:871px" width="6" height="9" viewBox="0 0 6 9"><path d="M5 0.5 L5 8.5 L1 4.5Z" fill="#1e1e1e"/></svg>
<svg style="position:absolute;left:1526px;top:871px" width="6" height="9" viewBox="0 0 6 9"><path d="M1 0.5 L1 8.5 L5 4.5Z" fill="#1e1e1e"/></svg>
<svg style="position:absolute;left:1317px;top:407px" width="12" height="18" viewBox="0 0 12 18"><path d="M0.5 0.5 L0.5 14 L3.7 11 L6 16.5 L8.2 15.5 L5.9 10.3 L10.5 10.3Z" fill="#f0f0f0" stroke="#202020" stroke-width="1"/></svg>
</body></html>
